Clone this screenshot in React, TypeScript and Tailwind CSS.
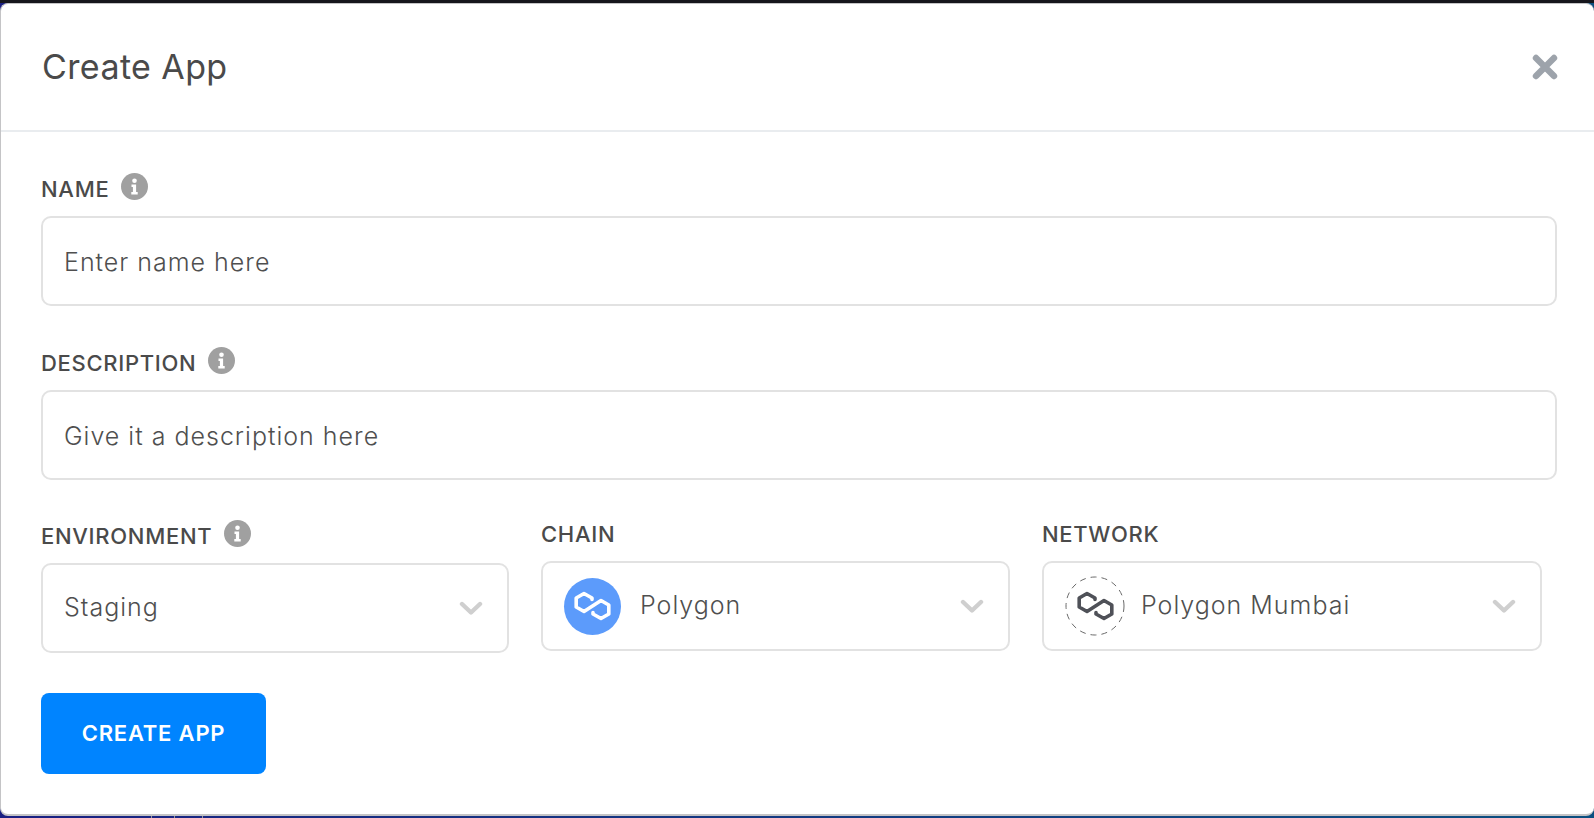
const sans = "font-['Inter','Roboto',sans-serif]";

function Info() {
  return (
    <svg width="27" height="27" viewBox="0 0 27 27" className="shrink-0">
      <circle cx="13.5" cy="13.5" r="13.5" fill="#a0a0a0" />
      <circle cx="13.5" cy="7.8" r="2.3" fill="#fff" />
      <path d="M10.5 11.5h4.6v7.6h1.6v2.4h-6.4v-2.4h1.6v-5.2h-1.4z" fill="#fff" />
    </svg>
  );
}

function Chevron() {
  return (
    <svg width="24" height="15" viewBox="0 0 24 15" className="shrink-0">
      <path d="M3 3l9 8.5L21 3" fill="none" stroke="#cfcfcf" strokeWidth="4.4" strokeLinecap="round" strokeLinejoin="round" />
    </svg>
  );
}

function PolygonMark({ color }: { color: string }) {
  return (
    <svg width="37" height="30" viewBox="0 0 37 30" fill="none" stroke={color} strokeWidth="3.6" strokeLinejoin="round" strokeLinecap="round">
      <path d="M18 8.500V7l-8-4.500L2.200 7v9l7.800 4.500L27 9.500l7.800 4.500v9L27 27.500 19 23v-1.500" />
    </svg>
  );
}

function DashedMark() {
  return (
    <span className="relative w-[60px] h-[60px] flex items-center justify-center mr-[16px]">
      <svg width="60" height="60" viewBox="0 0 60 60" className="absolute inset-0">
        <circle cx="30" cy="30" r="29" fill="none" stroke="#6a6a6a" strokeWidth="1" strokeDasharray="6 5" />
      </svg>
      <PolygonMark color="#4f5158" />
    </span>
  );
}

function Label({ text, info }: { text: string; info?: boolean }) {
  return (
    <div className="flex items-center gap-[12px] h-[27px] mb-[16px]">
      <span className="text-[22px] tracking-[0.7px] font-medium text-[#4a4a4a] leading-none mt-[4px]">{text}</span>
      {info && <Info />}
    </div>
  );
}

function TextInput({ placeholder }: { placeholder: string }) {
  return (
    <div className="h-[90px] border-2 border-[#e2e2e2] rounded-[10px] flex items-center px-[21px] pt-[3px] text-[25px] tracking-[1px] font-light text-[#4f4f4f]">
      {placeholder}
    </div>
  );
}

function Select({ children }: { children: React.ReactNode }) {
  return (
    <div className="h-[90px] border-2 border-[#e2e2e2] rounded-[10px] flex items-center justify-between pl-[21px] pr-[24px] text-[25px] tracking-[1px] font-light text-[#4f4f4f]">
      <div className="flex items-center">{children}</div>
      <Chevron />
    </div>
  );
}

export default function App() {
  return (
    <div className={`${sans} relative w-[1594px] h-[818px] overflow-hidden flex flex-col bg-gradient-to-r from-[#1a1f82] to-[#0b4f80]`}>
      <div className="h-[3px] bg-[#16161c] shrink-0" />
      <div className="h-[813px] shrink-0 bg-white rounded-[8px] border-l border-t border-b-2 border-[#c4c4c6] flex flex-col">
        <div className="h-[128px] shrink-0 border-b-2 border-[#e9ecef] flex items-center justify-between pl-[41px] pr-[35px]">
          <h1 className="text-[34px] tracking-[0.4px] font-normal text-[#4a4a4a] -mt-[1px]">Create App</h1>
          <svg width="28" height="28" viewBox="0 0 28 28">
            <path d="M5 5l18 18M23 5L5 23" stroke="#9da3ab" strokeWidth="6.4" strokeLinecap="round" />
          </svg>
        </div>
        <div className="pl-[40px] pr-[37px] pt-[41px] flex flex-col">
          <Label text="NAME" info />
          <TextInput placeholder="Enter name here" />
          <div className="h-[41px]" />
          <Label text="DESCRIPTION" info />
          <TextInput placeholder="Give it a description here" />
          <div className="h-[40px]" />
          <div className="flex gap-[32px] items-start pr-[15px]">
            <div className="w-[468px]">
              <Label text="ENVIRONMENT" info />
              <Select>Staging</Select>
            </div>
            <div className="w-[469px] -mt-[2px]">
              <Label text="CHAIN" />
              <Select>
                <span className="w-[57px] h-[57px] rounded-full bg-[#5c9bfb] flex items-center justify-center mr-[19px]">
                  <PolygonMark color="#ffffff" />
                </span>
                Polygon
              </Select>
            </div>
            <div className="flex-1 -mt-[2px]">
              <Label text="NETWORK" />
              <Select>
                <DashedMark />
                Polygon Mumbai
              </Select>
            </div>
          </div>
          <button className="mt-[40px] w-[225px] h-[81px] rounded-[8px] bg-[#0084ff] text-white text-[22px] tracking-[0.8px] font-semibold">
            CREATE APP
          </button>
        </div>
      </div>
      <div className="absolute left-[151px] bottom-0 w-px h-[2px] bg-[#9a9a9a]" />
      <div className="absolute left-[174px] bottom-0 w-px h-[2px] bg-[#9a9a9a]" />
      <div className="absolute left-[202px] bottom-0 w-px h-[2px] bg-[#9a9a9a]" />
    </div>
  );
}
